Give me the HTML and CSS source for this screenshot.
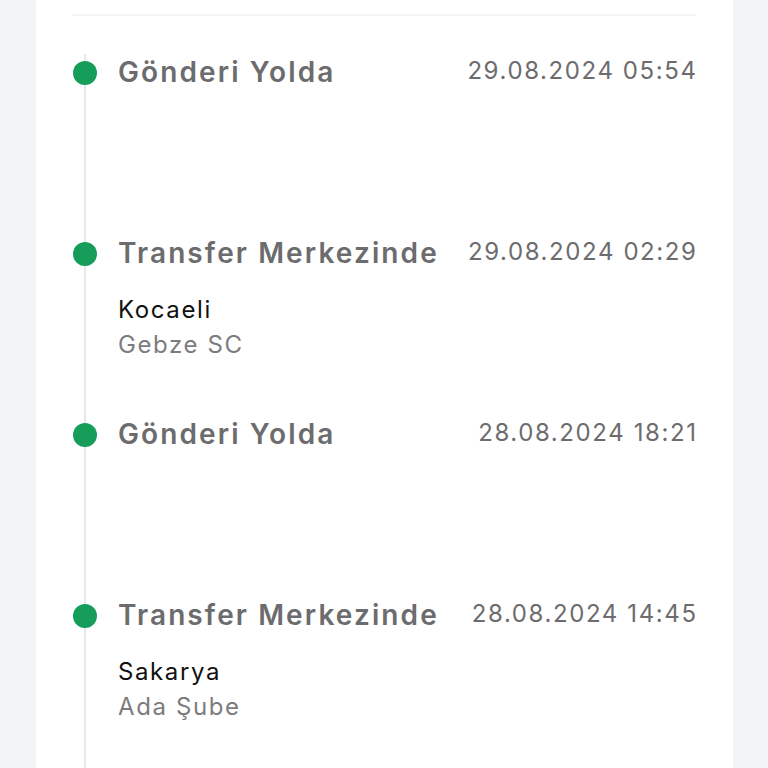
FILE: index.html
```html
<!DOCTYPE html>
<html lang="tr">
<head>
    <meta charset="UTF-8">
    <meta name="viewport" content="width=device-width, initial-scale=1.0">
    <title>Gönderi Hareketleri</title>
    <link rel="stylesheet" href="styles.css">
</head>
<body>
    <div class="card">
        <div class="divider"></div>

        <!-- Shipment movements -->
        <ul class="timeline">
            <li class="step">
                <div class="rail"><span class="dot"></span></div>
                <div class="info">
                    <div class="head">
                        <span class="status">Gönderi Yolda</span>
                        <span class="date">29.08.2024 05:54</span>
                    </div>
                </div>
            </li>
            <li class="step">
                <div class="rail"><span class="dot"></span></div>
                <div class="info">
                    <div class="head">
                        <span class="status">Transfer Merkezinde</span>
                        <span class="date">29.08.2024 02:29</span>
                    </div>
                    <div class="place">
                        <div class="city">Kocaeli</div>
                        <div class="branch">Gebze SC</div>
                    </div>
                </div>
            </li>
            <li class="step">
                <div class="rail"><span class="dot"></span></div>
                <div class="info">
                    <div class="head">
                        <span class="status">Gönderi Yolda</span>
                        <span class="date">28.08.2024 18:21</span>
                    </div>
                </div>
            </li>
            <li class="step">
                <div class="rail"><span class="dot"></span></div>
                <div class="info">
                    <div class="head">
                        <span class="status">Transfer Merkezinde</span>
                        <span class="date">28.08.2024 14:45</span>
                    </div>
                    <div class="place">
                        <div class="city">Sakarya</div>
                        <div class="branch">Ada Şube</div>
                    </div>
                </div>
            </li>
        </ul>
    </div>
</body>
</html>
```

FILE: styles.css
```css
body {
    margin: 0;
    height: 768px;
    overflow: hidden;
    background: #f3f4f6;
    font-family: Inter, 'Noto Sans', sans-serif;
}

.card {
    margin: 0 35px 0 36px;
    padding: 14px 37px 0 36px;
    background: #fff;
    height: 100%;
    box-sizing: border-box;
}

.divider {
    height: 2px;
    background: #f2f3f5;
}

/* Timeline */
.timeline {
    list-style: none;
    margin: 38px 0 0;
    padding: 0;
}

.step {
    display: flex;
    gap: 20px;
    min-height: 181px;
}

.rail {
    width: 26px;
    flex-shrink: 0;
    display: flex;
    justify-content: center;
    background: linear-gradient(#e6e7e9, #e6e7e9) center / 2px 100% no-repeat;
}

.dot {
    width: 24px;
    height: 24px;
    margin-top: 7px;
    border-radius: 50%;
    background: #179d5a;
}

.info {
    flex: 1;
}

.head {
    display: flex;
    justify-content: space-between;
    align-items: flex-start;
}

.status {
    font-size: 28px;
    font-weight: 600;
    line-height: 36px;
    letter-spacing: 2.1px;
    color: #6c6c6e;
}

.date {
    font-size: 24px;
    line-height: 34px;
    letter-spacing: 1.6px;
    margin-right: -1.6px;
    color: #6c6c6e;
}

.place {
    margin-top: 21px;
    font-size: 24px;
    line-height: 35px;
    letter-spacing: 1.6px;
}

.city {
    color: #111;
}

.branch {
    color: #7c7c7e;
}
```
